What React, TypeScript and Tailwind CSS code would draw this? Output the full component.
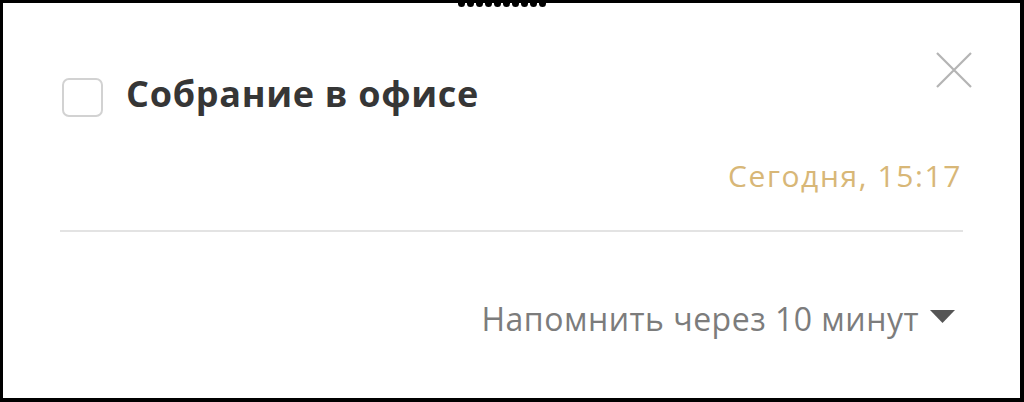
import { Fragment } from 'react'

const font = { fontFamily: '"Open Sans", "Noto Sans", sans-serif' }

export default function App() {
  return (
    <div
      className="relative w-[1024px] h-[402px] bg-white border-t-[3px] border-l-[3px] border-r-4 border-b-4 border-black overflow-hidden"
      style={font}
    >
      {/* гребёнка сверху */}
      <div className="absolute top-0 left-[455px] flex gap-[2px]">
        {Array.from({ length: 10 }, (_, i) => (
          <Fragment key={i}>
            <div className="w-[7px] h-[4px] bg-black rounded-b-full" />
          </Fragment>
        ))}
      </div>

      <div className="flex flex-col">
        {/* Шапка */}
        <div className="flex justify-between items-start pt-[49px] pl-[59px] pr-[47px]">
          <div className="flex items-start gap-[23px] mt-[26px]">
            <div className="w-[41px] h-[39px] rounded-[7px] border-2 border-[#d2d2d2] bg-white" />
            <span className="-mt-[2px] text-[36px] leading-none font-bold tracking-[0.7px] text-[#363636]">
              Собрание в офисе
            </span>
          </div>
          <svg width="38" height="36" viewBox="0 0 38 36" className="shrink-0">
            <path d="M2 1 L36 35 M36 1 L2 35" stroke="#b4b4b4" strokeWidth="2.2" fill="none" />
          </svg>
        </div>

        {/* Время */}
        <div className="mt-[44px] pr-[58px] text-right text-[30px] leading-none tracking-[1.6px] text-[#d8b777]">
          Сегодня, 15:17
        </div>

        <div className="mt-[39px] mx-[57px] h-[2px] bg-[#e3e3e3]" />

        {/* Напоминание */}
        <div className="mt-[71px] pr-[65px] flex justify-end items-center gap-[11px]">
          <span className="text-[32px] leading-none tracking-[0.5px] text-[#7c7c7c]">Напомнить через 10 минут</span>
          <svg width="25" height="13" viewBox="0 0 25 13" className="mt-[-6px]">
            <path d="M0 0 H25 L12.5 13 Z" fill="#555" />
          </svg>
        </div>
      </div>
    </div>
  )
}
